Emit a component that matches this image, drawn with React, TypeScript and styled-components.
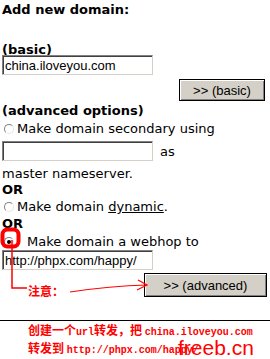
import styled, { createGlobalStyle } from "styled-components"

const GlobalStyle = createGlobalStyle`
    body {
        margin: 0;
        background: #fff;
        font-family: "DejaVu Sans", Verdana, sans-serif;
        font-size: 13px;
        color: #000;
    }
`

const Page = styled.div`
    position: relative;
    width: 270px;
    height: 359px;
    overflow: hidden;
`

const Form = styled.form`
    display: flex;
    flex-direction: column;
    padding: 0 2px;
`

const Heading = styled.div<{ $top: number }>`
    font-weight: bold;
    line-height: 16px;
    height: 16px;
    margin-top: ${(p) => p.$top}px;
`

const Line = styled.div<{ $top?: number }>`
    display: flex;
    align-items: center;
    line-height: 16px;
    height: 16px;
    margin-top: ${(p) => p.$top ?? 0}px;
    white-space: nowrap;
`

const Field = styled.input`
    box-sizing: border-box;
    width: 151px;
    height: 20px;
    margin: 0;
    padding: 0 2px;
    font-family: "Liberation Sans", Arial, sans-serif;
    font-size: 13px;
    color: #000;
    background: #fff;
    border: 1px solid;
    border-color: #808080 #d4d0c8 #d4d0c8 #808080;
    box-shadow: inset 1px 1px 0 #404040;
    outline: none;
`

const FieldRow = styled.div<{ $top: number }>`
    display: flex;
    align-items: center;
    height: 20px;
    margin-top: ${(p) => p.$top}px;
`

const After = styled.span`
    margin-left: 7px;
`

const ButtonRow = styled.div<{ $top: number; $right: number }>`
    display: flex;
    justify-content: flex-end;
    margin-top: ${(p) => p.$top}px;
    padding-right: ${(p) => p.$right}px;
`

const Submit = styled.button<{ $w: number; $h: number }>`
    box-sizing: border-box;
    width: ${(p) => p.$w}px;
    height: ${(p) => p.$h}px;
    padding: 0;
    font-family: "Liberation Sans", Arial, sans-serif;
    font-size: 13px;
    color: #000;
    background: #d4d0c8;
    border: 1px solid #000;
    box-shadow: inset 1px 1px 0 #fff, inset -1px -1px 0 #808080;
`

const Radio = styled.span<{ $checked?: boolean; $gap: number }>`
    position: relative;
    box-sizing: border-box;
    width: 10px;
    height: 10px;
    margin: 0 ${(p) => p.$gap}px 0 2px;
    border-radius: 50%;
    border: 1px solid;
    border-color: #808080 #e8e6e0 #e8e6e0 #808080;
    background: #fff;
    flex: none;

    &::after {
        content: "";
        display: ${(p) => (p.$checked ? "block" : "none")};
        position: absolute;
        left: 2px;
        top: 2px;
        width: 4px;
        height: 4px;
        border-radius: 50%;
        background: #000;
    }
`

const Under = styled.span`
    text-decoration: underline;
`

const Rule = styled.hr`
    margin: 0;
    margin-top: 23px;
    border: 0;
    border-top: 1px solid #000;
`

const Note = styled.div`
    padding: 1px 0 0 28px;
    color: #ff0000;
    font-size: 12px;
    line-height: 15px;
    font-weight: bold;
    font-family: "Noto Sans CJK SC", sans-serif;
    white-space: nowrap;
`

const Latin = styled.span`
    font-family: "Liberation Mono", monospace;
    font-size: 10px;
    font-weight: bold;
`

const Marks = styled.svg`
    position: absolute;
    left: 0;
    top: 0;
    pointer-events: none;
`

const Label = styled.span`
    position: absolute;
    left: 28px;
    top: 284px;
    color: #ff0000;
    font-size: 12px;
    line-height: 13px;
    font-weight: bold;
    font-family: "Noto Sans CJK SC", sans-serif;
`

const Watermark = styled.span`
    position: absolute;
    left: 178px;
    top: 336px;
    color: #ff0000;
    font-family: "Liberation Sans", Arial, sans-serif;
    font-size: 21px;
    line-height: 24px;
`

export default function App() {
    return (
        <Page>
            <GlobalStyle />
            <Form onSubmit={(e) => e.preventDefault()}>
                <Heading $top={2}>Add new domain:</Heading>
                <Heading $top={24}>(basic)</Heading>
                <FieldRow $top={-3}>
                    <Field defaultValue="china.iloveyou.com" />
                </FieldRow>
                <ButtonRow $top={4} $right={3}>
                    <Submit $w={86} $h={22}>&gt;&gt; (basic)</Submit>
                </ButtonRow>
                <Heading $top={2}>(advanced options)</Heading>
                <Line $top={2}>
                    <Radio $gap={3} />
                    Make domain secondary using
                </Line>
                <FieldRow $top={4}>
                    <Field />
                    <After>as</After>
                </FieldRow>
                <Line $top={5}>master nameserver.</Line>
                <Heading $top={0}>OR</Heading>
                <Line $top={1}>
                    <Radio $gap={3} />
                    Make domain&nbsp;<Under>dynamic</Under>.
                </Line>
                <Heading $top={1}>OR</Heading>
                <Line $top={2}>
                    <Radio $checked $gap={13} />
                    Make domain a webhop to
                </Line>
                <FieldRow $top={0}>
                    <Field defaultValue="http://phpx.com/happy/" />
                </FieldRow>
                <ButtonRow $top={3} $right={1}>
                    <Submit $w={123} $h={24}>&gt;&gt; (advanced)</Submit>
                </ButtonRow>
            </Form>
            <Rule />
            <Note>
                创建一个<Latin>url</Latin>转发，把 <Latin>china.iloveyou.com</Latin>
                <br />
                转发到 <Latin>http://phpx.com/happy/</Latin>
            </Note>
            <Marks width="270" height="359" viewBox="0 0 270 359">
                <rect x="2.5" y="229.5" width="16" height="17" rx="5" fill="none" stroke="#ff0000" strokeWidth="4" />
                <polyline points="12,240 12,288 27,288" fill="none" stroke="#ff0000" strokeWidth="1.5" />
                <path d="M70 292 Q110 286 147 285" fill="none" stroke="#ff0000" strokeWidth="1.2" />
                <path d="M138 280 L147 285 L137 290" fill="none" stroke="#ff0000" strokeWidth="1.2" />
            </Marks>
            <Label>注意：</Label>
            <Watermark>freeb.cn</Watermark>
        </Page>
    )
}
